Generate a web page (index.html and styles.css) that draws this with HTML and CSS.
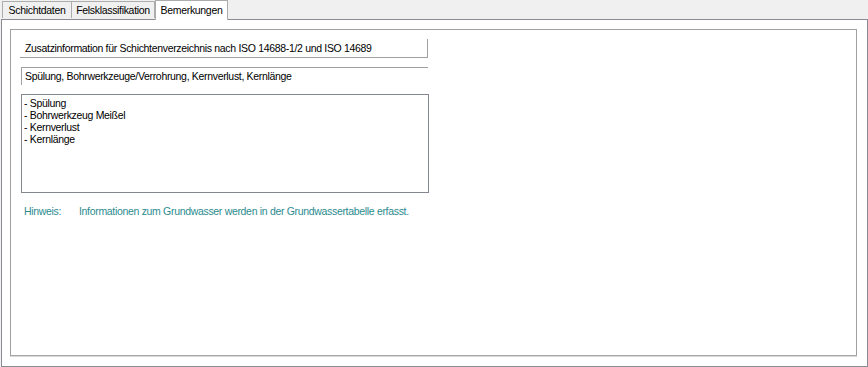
FILE: index.html
```html
<!DOCTYPE html>
<html lang="de">
<head>
<meta charset="utf-8">
<title>Bemerkungen</title>
<link rel="stylesheet" href="styles.css">
</head>
<body>
<div class="window">
  <div class="tabs">
    <div class="tab">Schichtdaten</div>
    <div class="tab">Felsklassifikation</div>
    <div class="tab active">Bemerkungen</div>
  </div>
  <div class="panel">
    <div class="group">
      <div class="label-box">Zusatzinformation für Schichtenverzeichnis nach ISO 14688-1/2 und ISO 14689</div>
      <div class="field">Spülung, Bohrwerkzeuge/Verrohrung, Kernverlust, Kernlänge</div>
      <div class="memo">- Spülung<br>- Bohrwerkzeug Meißel<br>- Kernverlust<br>- Kernlänge</div>
      <div class="hint">
        <span class="hint-label">Hinweis:</span>
        <span class="hint-text">Informationen zum Grundwasser werden in der Grundwassertabelle erfasst.</span>
      </div>
    </div>
  </div>
</div>
</body>
</html>
```
FILE: styles.css
```css
html, body {
  margin: 0;
  padding: 0;
}
body {
  width: 868px;
  height: 367px;
  background: #f0f0f0;
  font-family: "Liberation Sans", Arial, sans-serif;
  font-size: 10.5px;
  letter-spacing: -0.32px;
  color: #000;
  overflow: hidden;
}
.window {
  display: flex;
  flex-direction: column;
  height: 367px;
}
.tabs {
  display: flex;
  align-items: flex-end;
  height: 19px;
  padding-left: 2px;
  position: relative;
  z-index: 1;
}
.tab {
  box-sizing: border-box;
  display: flex;
  justify-content: center;
  height: 17px;
  margin-bottom: 1px;
  border: 1px solid #acacac;
  border-bottom: none;
  background: #f0f0f0;
  line-height: 16px;
  white-space: nowrap;
}
.tab:first-child { width: 70px; }
.tab:nth-child(2) { width: 83px; border-left: none; }
.tab.active {
  width: 73px;
  height: 20px;
  margin-bottom: -1px;
  background: #fff;
  line-height: 18px;
}
.panel {
  box-sizing: border-box;
  margin-left: 1px;
  width: 867px;
  height: 348px;
  border: 1px solid #898c95;
  background: #fff;
  padding: 9px 10px 11px 8px;
}
.group {
  box-sizing: border-box;
  height: 327px;
  border: 1px solid #a0a0a0;
  border-bottom-color: #a9a9a9;
  box-shadow: 0 1px 0 #d6d6d6;
  padding: 9px 0 0 9px;
}
.label-box {
  box-sizing: border-box;
  width: 408px;
  height: 19px;
  border-right: 1px solid #a0a0a0;
  border-bottom: 1px solid #a0a0a0;
  padding-left: 5px;
  line-height: 18px;
}
.field {
  box-sizing: border-box;
  width: 407px;
  height: 18px;
  margin: 9px 0 0 1px;
  border-top: 1px solid #a0a0a0;
  border-left: 1px solid #a0a0a0;
  padding-left: 3px;
  line-height: 17px;
}
.memo {
  box-sizing: border-box;
  width: 408px;
  height: 99px;
  margin: 9px 0 0 1px;
  border: 1px solid #828790;
  padding: 2px 0 0 2px;
  line-height: 12px;
}
.hint {
  display: flex;
  margin: 11px 0 0 4px;
  color: #2b8b8f;
  line-height: 14px;
}
.hint-label {
  width: 55px;
}
```
